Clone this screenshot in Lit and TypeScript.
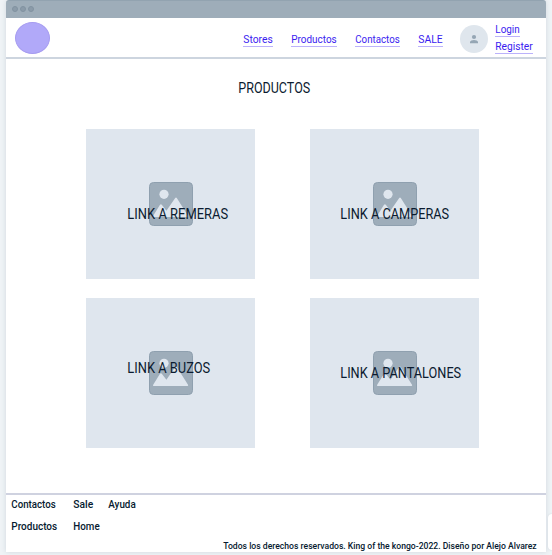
import { LitElement, html, css, svg } from "lit";
import { customElement, property } from "lit/decorators.js";

/** A single line of condensed text, set to an exact width. */
@customElement("fit-text")
export class FitText extends LitElement {
  @property() text = "";
  @property({ type: Number }) width = 50;
  @property({ type: Number }) size = 11;
  @property({ type: Number }) height = 14;
  @property({ type: Number }) weight = 400;

  static styles = css`
    :host { display: block; flex: none; }
    .line { display: block; overflow: visible; }
    text { font-family: Roboto, "Liberation Sans", sans-serif; fill: currentColor; }
  `;

  render() {
    return html`<svg class="line" width=${this.width} height=${this.height}>
      ${svg`<text x="0.3" y=${this.height - 3} font-size=${this.size} font-weight=${this.weight}
        textLength=${this.width - 0.6} lengthAdjust="spacingAndGlyphs">${this.text}</text>`}
    </svg>`;
  }
}

@customElement("product-card")
export class ProductCard extends LitElement {
  @property() label = "";
  @property({ type: Number }) width = 100;
  @property({ type: Number }) left = 41;
  @property({ type: Number }) top = 76;

  static styles = css`
    :host { display: block; position: relative; height: 150px; background: #dfe6ee; color: #0b1b30; }
    .picture { display: block; margin: 0 auto; padding-top: 53px; }
    .label { position: absolute; }
  `;

  render() {
    return html`
      <svg class="picture" width="44" height="44" viewBox="0 0 44 44">
        <rect x=".5" y=".5" width="43" height="43" rx="4" fill="#9eadba" stroke="#8fa0af" />
        <circle cx="15" cy="12.3" r="4.6" fill="#dfe6ee" />
        <path d="M4.7 35 Q3.5 35 4.2 33.8 L11 22.8 Q12 21.8 12.8 22.8 L17.4 28.8 L26.2 16 Q27 15 27.8 16 L39 33.8 Q39.6 35 38.4 35Z" fill="#dfe6ee" />
      </svg>
      <fit-text class="label" style="left:${this.left}px;top:${this.top}px"
        .text=${this.label} .width=${this.width} .size=${14} .height=${17}></fit-text>
    `;
  }
}

@customElement("app-root")
export class AppRoot extends LitElement {
  static styles = css`
    :host { display: block; box-sizing: border-box; width: 552px; height: 555px; padding: 0 6px; background: #eff3f6; position: relative; overflow: hidden; }
    .window { width: 540px; height: 552px; background: #fff; display: flex; flex-direction: column; border-radius: 3px 3px 0 0; box-shadow: 0 0 5px #cfd7de; }
    .bar { box-sizing: border-box; height: 18px; flex: none; background: #9eadb9; border-top: 1px solid #92a3b0; border-radius: 3px 3px 0 0; display: flex; gap: 2px; padding: 5px 0 0 6px; }
    .dot { box-sizing: border-box; width: 6px; height: 6px; border-radius: 50%; background: #8b9ba9; border: 1px solid #8192a1; }
    .header { box-sizing: border-box; height: 41px; flex: none; border-bottom: 2px solid #cdd5df; display: flex; align-items: flex-start; padding-left: 9px; color: #3a1cf0; }
    .logo { box-sizing: border-box; width: 35px; height: 32px; margin-top: 4px; border-radius: 50%; background: #b1a9f9; border: 1px solid #a69cf0; }
    .nav { display: flex; gap: 18px; margin: 14px 0 0 193px; }
    .link { border-bottom: 1px solid #bbb2fb; }
    .avatar { width: 28px; height: 28px; margin: 7px 0 0 17px; }
    .account { display: flex; flex-direction: column; align-items: flex-start; gap: 2px; margin: 4px 0 0 7px; }
    .main { flex: 1; color: #0b1b30; }
    .title { margin: 20px 0 0 232px; }
    .grid { display: grid; grid-template-columns: 169px 169px; column-gap: 55px; row-gap: 19px; margin: 33px 0 0 80px; }
    .footer { box-sizing: border-box; height: 59px; flex: none; border-top: 2px solid #cfd2e0; color: #061a30; display: flex; flex-direction: column; }
    .links { display: grid; grid-template-columns: 62px 35px 40px; row-gap: 8px; padding: 2px 0 0 5px; }
    .copy { align-self: flex-end; margin: 5px 9px 0 0; }
    .tab { position: absolute; left: 548px; top: 514px; width: 12px; height: 36px; background: #fff; border-radius: 4px; box-shadow: 0 0 2px #cfd6dc; }
  `;

  private link(text: string, width: number) {
    return html`<fit-text class="link" .text=${text} .width=${width} .weight=${450}></fit-text>`;
  }

  private footerLink(text: string, width: number) {
    return html`<fit-text .text=${text} .width=${width} .weight=${500}></fit-text>`;
  }

  render() {
    return html`
      <div class="window">
        <div class="bar"><i class="dot"></i><i class="dot"></i><i class="dot"></i></div>
        <header class="header">
          <div class="logo"></div>
          <nav class="nav">
            ${this.link("Stores", 30)}${this.link("Productos", 46)}${this.link("Contactos", 45)}${this.link("SALE", 25)}
          </nav>
          <svg class="avatar" viewBox="0 0 28 28">
            <circle cx="14" cy="14" r="14" fill="#dfe6ed" />
            <circle cx="14" cy="12" r="2.1" fill="#95a6b4" />
            <path d="M10 18.2V17c0-1.4 2.4-2.1 4-2.1s4 .7 4 2.1v1.2z" fill="#95a6b4" />
          </svg>
          <div class="account">${this.link("Login", 25)}${this.link("Register", 38)}</div>
        </header>
        <main class="main">
          <fit-text class="title" .text=${"PRODUCTOS"} .width=${72.5} .size=${14} .height=${17}></fit-text>
          <div class="grid">
            <product-card .label=${"LINK A REMERAS"} .width=${101.5}></product-card>
            <product-card .label=${"LINK A CAMPERAS"} .width=${109.5} .left=${30}></product-card>
            <product-card .label=${"LINK A BUZOS"} .width=${83.5} .top=${61}></product-card>
            <product-card .label=${"LINK A PANTALONES"} .width=${121.5} .left=${30} .top=${66}></product-card>
          </div>
        </main>
        <footer class="footer">
          <div class="links">
            ${this.footerLink("Contactos", 45)}${this.footerLink("Sale", 20.5)}${this.footerLink("Ayuda", 28)}
            ${this.footerLink("Productos", 46.5)}${this.footerLink("Home", 27)}
          </div>
          <fit-text class="copy" .text=${"Todos los derechos reservados. King of the kongo-2022. Diseño por Alejo Alvarez"}
            .width=${314} .size=${9.5} .weight=${500}></fit-text>
        </footer>
      </div>
      <div class="tab"></div>
    `;
  }
}
